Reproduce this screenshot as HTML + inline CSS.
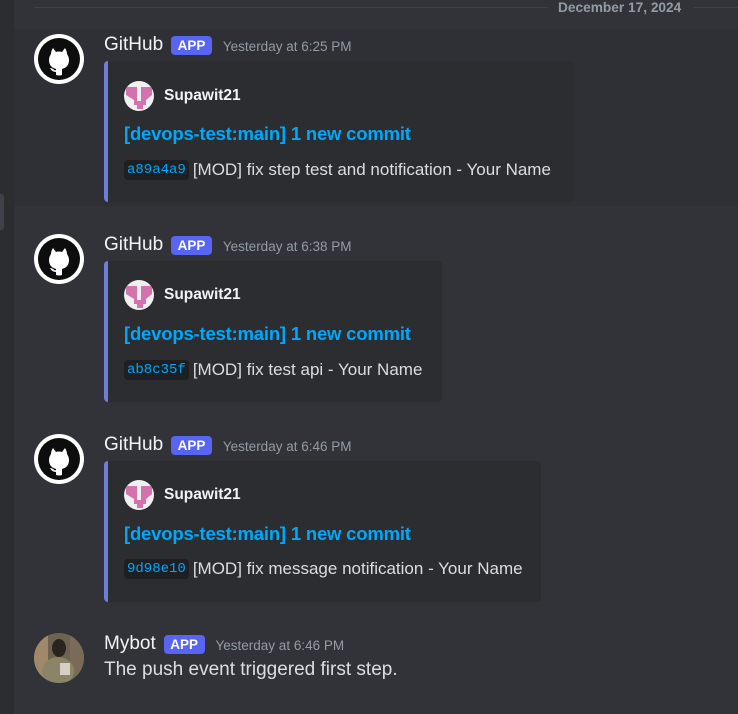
<!DOCTYPE html>
<html><head><meta charset="utf-8"><style>
*{margin:0;padding:0;box-sizing:border-box}
body{width:738px;height:714px;background:#313338;font-family:"Liberation Sans",sans-serif;position:relative;overflow:hidden;color:#dbdee1}
.strip{position:absolute;left:0;top:0;width:14px;height:714px;background:#2b2d31}
.nub{position:absolute;left:0;top:194px;width:4px;height:36px;background:#404249;border-radius:0 3px 3px 0}
.hover{position:absolute;left:14px;top:29px;width:724px;height:177px;background:#2e3035}
.divline{position:absolute;top:7px;height:1px;background:#3f4147}
.date{position:absolute;left:558px;top:0;font-size:13.7px;font-weight:bold;color:#949ba4}
.av{position:absolute;left:34px;width:50px;height:50px;border-radius:50%;background:#fff}
.av svg{position:absolute;left:0;top:0}
.hdr{position:absolute;left:104px;display:flex;align-items:center;height:22px;white-space:nowrap}
.name{font-size:19px;color:#f2f3f5}
.app{height:19px;background:#5865f2;color:#fff;font-weight:bold;font-size:13.5px;border-radius:4px;padding:0 6.5px;line-height:19px;margin-left:8px}
.ts{font-size:13.5px;color:#949ba4;margin-left:11px;margin-top:2px}
.embed{position:absolute;left:104px;background:#2b2d31;border-left:4px solid #6f7fd8;border-radius:4px;height:141px}
.ea{position:absolute;left:124px;width:30px;height:30px;border-radius:50%;background:#f0f0f0;overflow:hidden}
.en{position:absolute;left:164px;font-size:15.5px;font-weight:bold;color:#f2f3f5}
.et{position:absolute;left:124px;font-size:18.5px;font-weight:bold;color:#00a8fc;letter-spacing:-0.2px}
.ed{position:absolute;left:124px;font-size:17px;color:#dbdee1;white-space:nowrap;display:flex;align-items:center;height:22px}
.ed code{font-family:"Liberation Mono",monospace;font-size:14px;color:#00a8fc;background:#1e1f22;border-radius:4px;padding:2px 3px;margin-right:4px}
.msg{position:absolute;left:104px;top:659px;font-size:19px;color:#dbdee1}
</style></head><body>
<div class="strip"></div><div class="nub"></div>
<div class="hover"></div>
<div class="divline" style="left:34px;width:514px"></div>
<div class="divline" style="left:694px;width:44px"></div>
<div class="date">December 17, 2024</div>

<div class="av" style="top:34px"><svg width="50" height="50" viewBox="0 0 50 50"><circle cx="25" cy="25" r="21" fill="#0d0d0d"/><path fill="#fff" d="M19 14 L22 18 Q25 17 28 18 L31 14 Q33 17 33 20 Q35 23 35 26 Q35 33 28 35 L28 41 Q25 42 22 41 L22 38 Q18 38 16 34 Q18 34 19 35 Q21 37 22 36 L22 35 Q15 33 15 26 Q15 23 17 20 Q17 17 19 14Z"/></svg></div>
<div class="hdr" style="top:34px"><span class="name">GitHub</span><span class="app">APP</span><span class="ts">Yesterday at 6:25 PM</span></div>
<div class="embed" style="top:61px;width:470px"></div>
<div class="ea" style="top:81px"><svg width="30" height="30"><path fill="#d372ad" d="M2 6h11v14h4V6h11v8l-6 5v5h-3v4h-6v-4H10v-5l-8-5z"/></svg></div>
<div class="en" style="top:87px">Supawit21</div>
<div class="et" style="top:123px">[devops-test:main] 1 new commit</div>
<div class="ed" style="top:159px"><code>a89a4a9</code>[MOD] fix step test and notification - Your Name</div>

<div class="av" style="top:234px"><svg width="50" height="50" viewBox="0 0 50 50"><circle cx="25" cy="25" r="21" fill="#0d0d0d"/><path fill="#fff" d="M19 14 L22 18 Q25 17 28 18 L31 14 Q33 17 33 20 Q35 23 35 26 Q35 33 28 35 L28 41 Q25 42 22 41 L22 38 Q18 38 16 34 Q18 34 19 35 Q21 37 22 36 L22 35 Q15 33 15 26 Q15 23 17 20 Q17 17 19 14Z"/></svg></div>
<div class="hdr" style="top:234px"><span class="name">GitHub</span><span class="app">APP</span><span class="ts">Yesterday at 6:38 PM</span></div>
<div class="embed" style="top:261px;width:338px"></div>
<div class="ea" style="top:280px"><svg width="30" height="30"><path fill="#d372ad" d="M2 6h11v14h4V6h11v8l-6 5v5h-3v4h-6v-4H10v-5l-8-5z"/></svg></div>
<div class="en" style="top:286px">Supawit21</div>
<div class="et" style="top:323px">[devops-test:main] 1 new commit</div>
<div class="ed" style="top:359px"><code>ab8c35f</code>[MOD] fix test api - Your Name</div>

<div class="av" style="top:434px"><svg width="50" height="50" viewBox="0 0 50 50"><circle cx="25" cy="25" r="21" fill="#0d0d0d"/><path fill="#fff" d="M19 14 L22 18 Q25 17 28 18 L31 14 Q33 17 33 20 Q35 23 35 26 Q35 33 28 35 L28 41 Q25 42 22 41 L22 38 Q18 38 16 34 Q18 34 19 35 Q21 37 22 36 L22 35 Q15 33 15 26 Q15 23 17 20 Q17 17 19 14Z"/></svg></div>
<div class="hdr" style="top:434px"><span class="name">GitHub</span><span class="app">APP</span><span class="ts">Yesterday at 6:46 PM</span></div>
<div class="embed" style="top:461px;width:437px"></div>
<div class="ea" style="top:480px"><svg width="30" height="30"><path fill="#d372ad" d="M2 6h11v14h4V6h11v8l-6 5v5h-3v4h-6v-4H10v-5l-8-5z"/></svg></div>
<div class="en" style="top:486px">Supawit21</div>
<div class="et" style="top:523px">[devops-test:main] 1 new commit</div>
<div class="ed" style="top:558px"><code>9d98e10</code>[MOD] fix message notification - Your Name</div>

<div class="av" style="top:633px;background:#6e6350;overflow:hidden"><svg width="50" height="50"><rect x="0" y="0" width="14" height="50" fill="#a08868"/><rect x="36" y="0" width="14" height="50" fill="#7a6a58"/><ellipse cx="25" cy="15" rx="7" ry="9" fill="#2a2420"/><ellipse cx="24" cy="38" rx="16" ry="14" fill="#8c8468"/><rect x="26" y="30" width="10" height="12" fill="#d8cfc4"/></svg></div>
<div class="hdr" style="top:633px"><span class="name">Mybot</span><span class="app">APP</span><span class="ts">Yesterday at 6:46 PM</span></div>
<div class="msg">The push event triggered first step.</div>
</body></html>
